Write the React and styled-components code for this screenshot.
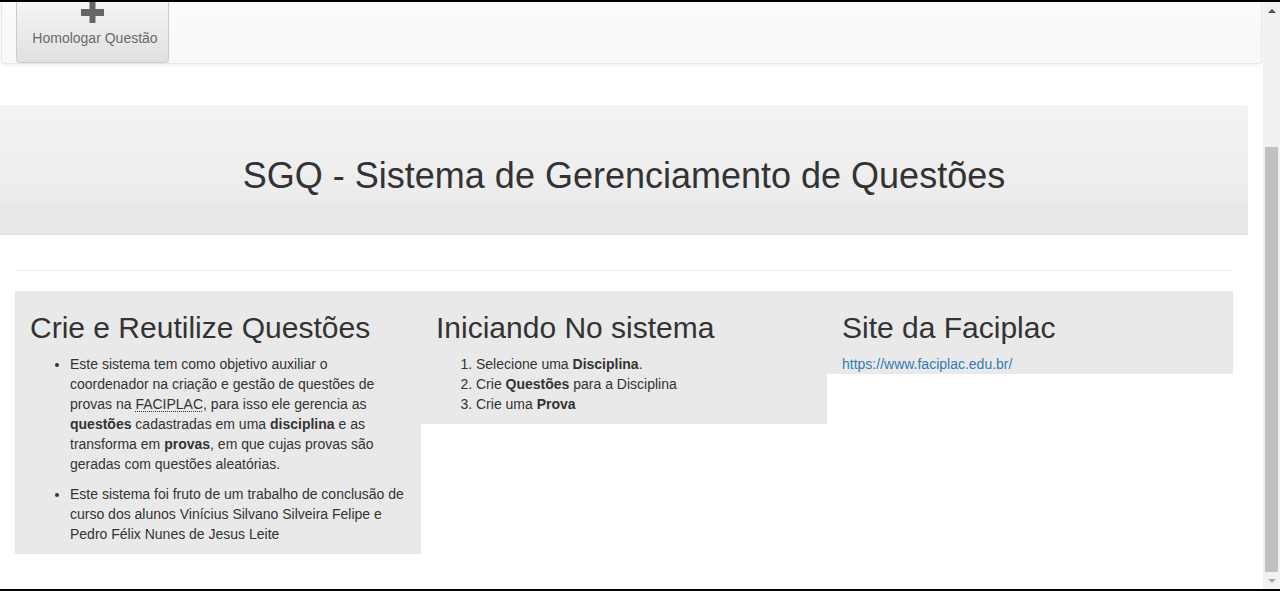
import React from "react";
import styled, { createGlobalStyle } from "styled-components";

const GlobalStyle = createGlobalStyle`
  html, body {
    margin: 0;
    padding: 0;
    background: #000;
  }
  body {
    font-family: "Liberation Sans", Arial, Helvetica, sans-serif;
    font-size: 14px;
    line-height: 20px;
    color: #333;
  }
  * {
    box-sizing: border-box;
  }
`;

const Screen = styled.div`
  width: 1280px;
  height: 591px;
  padding: 2px 0;
  background: #000;
  overflow: hidden;
`;

const Viewport = styled.div`
  display: flex;
  height: 587px;
  background: #fff;
`;

const Page = styled.div`
  flex: 1;
  overflow: hidden;
`;

const Navbar = styled.nav`
  display: flex;
  align-items: flex-end;
  height: 62px;
  margin: 0 1px;
  padding: 0 14px;
  overflow: hidden;
  background: linear-gradient(to bottom, #fbfbfb 0, #f8f8f8 100%);
  border: 1px solid #e7e7e7;
  border-top: none;
  border-radius: 0 0 4px 4px;
  box-shadow: 0 1px 5px rgba(0, 0, 0, 0.075);
`;

const NavButton = styled.button`
  display: flex;
  flex-direction: column;
  align-items: center;
  justify-content: flex-end;
  flex-shrink: 0;
  height: 90px;
  width: 153px;
  padding: 0 10px 14px;
  font-family: inherit;
  font-size: 14px;
  line-height: 20px;
  color: #6a6a6a;
  background: linear-gradient(to bottom, #ffffff 0, #e0e0e0 100%);
  border: 1px solid #ccc;
  border-radius: 4px;
  box-shadow: 0 1px 1px rgba(0, 0, 0, 0.075);
  cursor: pointer;
`;

const ButtonLabel = styled.span`
  padding-left: 5px;
  white-space: nowrap;
`;

const PlusIcon = styled.svg`
  width: 23px;
  height: 22px;
  margin-bottom: 5px;
  fill: #666;
`;

const Jumbotron = styled.header`
  display: flex;
  align-items: center;
  justify-content: center;
  width: 1248px;
  height: 130px;
  margin-top: 41px;
  padding-top: 12px;
  background: linear-gradient(
    to bottom,
    #f3f3f3 0,
    #ececec 74%,
    #e8e8e8 76%,
    #e8e8e8 100%
  );
  border-bottom: 1px solid #dedede;
  border-top-right-radius: 3px;
`;

const Title = styled.h1`
  margin: 0;
  font-size: 36px;
  font-weight: 500;
  line-height: 1.1;
  color: #333;
`;

const Container = styled.div`
  width: 1218px;
  margin-left: 15px;
`;

const Rule = styled.hr`
  margin: 35px 0 20px;
  border: 0;
  border-top: 1px solid #eee;
`;

const Row = styled.div`
  display: flex;
  align-items: flex-start;
`;

const Column = styled.section`
  flex: 0 0 406px;
  padding: 0 15px;
  background: #e9e9e9;
`;

const Heading = styled.h2`
  margin: 20px 0 10px;
  font-size: 30px;
  font-weight: 500;
  line-height: 33px;
  color: #333;
`;

const BulletList = styled.ul`
  margin: 0 0 10px;
  padding-left: 40px;

  li + li {
    margin-top: 10px;
  }
`;

const StepList = styled.ol`
  margin: 0 0 10px;
  padding-left: 40px;
`;

const Abbr = styled.abbr`
  text-decoration: underline dotted;
  text-decoration-thickness: 1px;
  text-underline-offset: 2px;
  cursor: help;
`;

const Link = styled.a`
  display: block;
  color: #337ab7;
  text-decoration: none;
`;

const Scrollbar = styled.div`
  display: flex;
  flex-direction: column;
  width: 17px;
  flex-shrink: 0;
  background: #f1f1f1;
`;

const Arrow = styled.div`
  display: flex;
  align-items: center;
  justify-content: center;
  height: 17px;

  &::before {
    content: "";
    border-left: 4px solid transparent;
    border-right: 4px solid transparent;
    ${({ $down, $color }) =>
      $down
        ? `border-top: 4px solid ${$color};`
        : `border-bottom: 4px solid ${$color};`}
  }
`;

const Thumb = styled.div`
  height: 425px;
  margin: 128px 2px 0;
  background: #c1c1c1;
`;

export default function App() {
  return (
    <>
      <GlobalStyle />
      <Screen>
        <Viewport>
          <Page>
            <Navbar>
              <NavButton type="button">
                <PlusIcon viewBox="0 0 23 22">
                  <rect x="0" y="8" width="23" height="7" />
                  <rect x="8.5" y="0" width="6" height="22" />
                </PlusIcon>
                <ButtonLabel>Homologar Questão</ButtonLabel>
              </NavButton>
            </Navbar>

            <Jumbotron>
              <Title>SGQ - Sistema de Gerenciamento de Questões</Title>
            </Jumbotron>

            <Container>
              <Rule />
              <Row>
                <Column>
                  <Heading>Crie e Reutilize Questões</Heading>
                  <BulletList>
                    <li>
                      Este sistema tem como objetivo auxiliar o coordenador na
                      criação e gestão de questões de provas na{" "}
                      <Abbr title="Faculdades Integradas da União Educacional do Planalto Central">
                        FACIPLAC
                      </Abbr>
                      , para isso ele gerencia as <b>questões</b> cadastradas
                      em uma <b>disciplina</b> e as transforma em{" "}
                      <b>provas</b>, em que cujas provas são geradas com
                      questões aleatórias.
                    </li>
                    <li>
                      Este sistema foi fruto de um trabalho de conclusão de
                      curso dos alunos Vinícius Silvano Silveira Felipe e Pedro
                      Félix Nunes de Jesus Leite
                    </li>
                  </BulletList>
                </Column>

                <Column>
                  <Heading>Iniciando No sistema</Heading>
                  <StepList>
                    <li>
                      Selecione uma <b>Disciplina</b>.
                    </li>
                    <li>
                      Crie <b>Questões</b> para a Disciplina
                    </li>
                    <li>
                      Crie uma <b>Prova</b>
                    </li>
                  </StepList>
                </Column>

                <Column>
                  <Heading>Site da Faciplac</Heading>
                  <Link href="https://www.faciplac.edu.br/">
                    https://www.faciplac.edu.br/
                  </Link>
                </Column>
              </Row>
            </Container>
          </Page>

          <Scrollbar>
            <Arrow $color="#505050" />
            <Thumb />
            <Arrow $down $color="#a3a3a3" />
          </Scrollbar>
        </Viewport>
      </Screen>
    </>
  );
}
